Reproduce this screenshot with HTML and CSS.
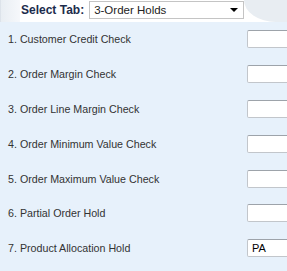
FILE: index.html
```html
<!DOCTYPE html>
<html lang="en">
<head>
  <meta charset="UTF-8" />
  <meta name="viewport" content="width=device-width, initial-scale=1.0"/>
  <title>Order Holds</title>
  <link rel="stylesheet" href="styles.css">
</head>
<body>
  <div class="tabbar">
    <div class="tab-edge"></div>
    <div class="tab-main">
      <span class="tab-label">Select Tab:</span>
      <div class="select">
        <span>3-Order Holds</span>
        <span class="arrow"></span>
      </div>
    </div>
    <div class="tab-corner"></div>
  </div>

  <div class="checks">
    <div class="row"><span>1. Customer Credit Check</span><input class="field" type="text" value=""></div>
    <div class="row"><span>2. Order Margin Check</span><input class="field" type="text" value=""></div>
    <div class="row"><span>3. Order Line Margin Check</span><input class="field" type="text" value=""></div>
    <div class="row"><span>4. Order Minimum Value Check</span><input class="field" type="text" value=""></div>
    <div class="row"><span>5. Order Maximum Value Check</span><input class="field" type="text" value=""></div>
    <div class="row"><span>6. Partial Order Hold</span><input class="field" type="text" value=""></div>
    <div class="row"><span>7. Product Allocation Hold</span><input class="field" type="text" value="PA"></div>
  </div>
</body>
</html>
```

FILE: styles.css
```css
body {
  margin: 0;
  background-color: #e7f1fb;
  font-family: "Liberation Sans", Arial, sans-serif;
  color: #333;
  overflow: hidden;
}

.tabbar {
  display: flex;
  height: 22px;
  background-color: #fff;
}

.tab-edge {
  width: 20px;
  flex-shrink: 0;
  background: linear-gradient(to right, #e9eef3, #f6f8fb);
  border-left: 1px solid #dde3ea;
  box-sizing: border-box;
}

.tab-main {
  flex: 1;
  display: flex;
  align-items: center;
  padding: 0 0 2px 1px;
  white-space: nowrap;
}

.tab-label {
  flex-shrink: 0;
  font-size: 12px;
  font-weight: bold;
  color: #1c2c4c;
  margin-right: 5px;
}

.select {
  flex-shrink: 0;
  width: 155px;
  height: 18px;
  box-sizing: border-box;
  border: 1px solid #c4c4c4;
  background: #fff;
  display: flex;
  align-items: center;
  justify-content: space-between;
  padding: 0 5px 0 4px;
  font-size: 11.5px;
  color: #222;
}

.arrow {
  width: 0;
  height: 0;
  border-left: 4px solid transparent;
  border-right: 4px solid transparent;
  border-top: 4px solid #000;
}

.tab-corner {
  width: 44px;
  flex-shrink: 0;
  background-color: #e8edf2;
  border-bottom-left-radius: 32px 22px;
}

.checks {
  display: flex;
  flex-direction: column;
}

.row {
  height: 34.8px;
  display: flex;
  align-items: center;
  justify-content: space-between;
  padding-left: 8px;
  font-size: 10.7px;
  white-space: nowrap;
}

.field {
  width: 48px;
  height: 18px;
  box-sizing: border-box;
  margin: 0 -8px 0 0;
  border: 1px solid #c2c6cb;
  border-top-color: #9da3aa;
  border-radius: 2px;
  background: #fff;
  font-family: "Liberation Sans", Arial, sans-serif;
  font-size: 11px;
  color: #000;
  padding: 0 4px;
  outline: none;
}
```
